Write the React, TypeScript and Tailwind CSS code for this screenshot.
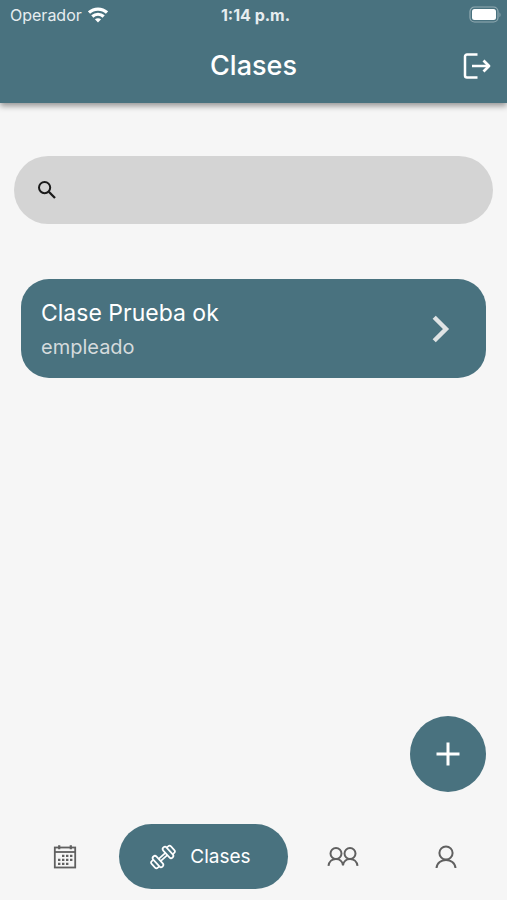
import { useState } from 'react';

const classes = [{ id: 1, name: 'Clase Prueba ok', trainer: 'empleado' }];

function WifiIcon() {
  return (
    <svg width="20" height="16" viewBox="0 0 20 16" fill="none" stroke="white" strokeWidth="3.2">
      <path d="M1 5.6C6 .9 14 .9 19 5.6" />
      <path d="M4.3 9.5c3.3-3 8.1-3 11.4 0" />
      <path d="M10 15.4 6.9 12.3c1.7-1.5 4.500-1.500 6.200 0z" fill="white" stroke="none" />
    </svg>
  );
}

function BatteryIcon() {
  return (
    <svg width="33" height="18" viewBox="0 0 33 18" fill="none">
      <rect x="2" y="1" width="28" height="15" rx="4.5" stroke="#94acb4" strokeWidth="1.2" />
      <rect x="4" y="3" width="24" height="11" rx="2.5" fill="white" />
      <path d="M31.500 6.500c1.300.6 1.300 4 0 4.600z" fill="#94acb4" />
    </svg>
  );
}

function LogoutIcon() {
  return (
    <svg width="28" height="26" viewBox="0 0 28 26" fill="none" stroke="white" strokeWidth="2.5">
      <path d="M14.500 1.500H4a2 2 0 0 0-2 2v19a2 2 0 0 0 2 2h10.500" />
      <path d="M9 13h16.500" />
      <path d="m20.500 7.500 5.500 5.500-5.500 5.500" strokeLinejoin="round" strokeWidth="2.8" />
    </svg>
  );
}

function SearchIcon() {
  return (
    <svg width="18" height="18" viewBox="0 0 18 18" fill="none" stroke="#1a1a1a" strokeWidth="2">
      <circle cx="6.600" cy="6.600" r="5.600" />
      <path d="m10.800 10.800 6.200 6.200" strokeWidth="2.300" />
    </svg>
  );
}

function ChevronIcon() {
  return (
    <svg width="18" height="28" viewBox="0 0 18 28" fill="none" stroke="#dfe3e4" strokeWidth="4.4">
      <path d="M2.200 2.200 14 14 2.200 25.800" />
    </svg>
  );
}

function PlusIcon() {
  return (
    <svg width="24" height="24" viewBox="0 0 24 24" stroke="white" strokeWidth="3">
      <path d="M12 .5v23M.5 12h23" />
    </svg>
  );
}

function CalendarIcon() {
  return (
    <svg width="24" height="24" viewBox="0 0 24 24" fill="none" stroke="#606060" strokeWidth="1.8">
      <rect x="1.800" y="2.500" width="20.400" height="20" />
      <path d="M2 7h20" />
      <path d="M6.200.3v4M17.800.3v4" strokeWidth="2.200" />
      <path d="M9 10.800h11M5 14.800h15M5 18.800h11" strokeWidth="2.200" strokeDasharray="2.400 1.600" />
    </svg>
  );
}

function DumbbellIcon() {
  return (
    <svg width="26" height="26" viewBox="0 0 26 26" fill="none" stroke="white" strokeWidth="1.7">
      <g transform="rotate(-42 13 13)">
        <path d="M8.500 11.600h9M8.500 14.400h9" />
        <rect x="4" y="6.200" width="4.500" height="13.600" rx="2.200" />
        <rect x="17.500" y="6.200" width="4.500" height="13.600" rx="2.200" />
        <path d="M4 8.500H2A2 2 0 0 0 0 10.500v5a2 2 0 0 0 2 2h2" />
        <path d="M22 8.500h2a2 2 0 0 1 2 2v5a2 2 0 0 1-2 2h-2" />
      </g>
    </svg>
  );
}

function PeopleIcon() {
  return (
    <svg width="32" height="20" viewBox="0 0 32 20" fill="none" stroke="#606060" strokeWidth="2">
      <circle cx="9" cy="6.500" r="5.500" />
      <circle cx="23" cy="6.500" r="5.500" />
      <path d="M1.500 18.800C2.500 9.700 15 9.700 16 18.300 17 9.700 29.500 9.700 30.500 18.800" />
    </svg>
  );
}

function PersonIcon() {
  return (
    <svg width="22" height="24" viewBox="0 0 22 24" fill="none" stroke="#606060" strokeWidth="2">
      <circle cx="11" cy="8" r="6.600" />
      <path d="M1.500 23c.8-10.800 18.200-10.800 19 0" />
    </svg>
  );
}

export default function App() {
  const [search, setSearch] = useState('');

  const filtered = classes.filter((c) =>
    c.name.toLowerCase().includes(search.toLowerCase())
  );

  return (
    <div className="flex min-h-screen flex-col bg-[#f6f6f6] font-['Inter',sans-serif]">
      <header className="bg-[#49727f] text-white shadow-[0_3px_6px_rgba(0,0,0,0.4)]">
        <div className="grid h-7 grid-cols-3 items-center pl-2.5 pr-1.5 pt-0.5 text-base leading-6">
          <div className="flex items-center gap-1.5 text-[#e6edf0]">
            <span>Operador</span>
            <WifiIcon />
          </div>
          <span className="text-center font-bold text-[#e6edf0]">1:14 p.m.</span>
          <div className="flex justify-end">
            <BatteryIcon />
          </div>
        </div>
        <div className="grid h-[75px] grid-cols-[1fr_auto_1fr] items-center px-4">
          <h1 className="col-start-2 text-[27px] font-medium leading-8">Clases</h1>
          <button type="button" aria-label="Salir" className="justify-self-end">
            <LogoutIcon />
          </button>
        </div>
      </header>

      <main className="flex flex-1 flex-col">
        <label className="mx-3.5 mt-[53px] flex h-[68px] items-center gap-3 rounded-full bg-[#d4d4d4] px-6">
          <SearchIcon />
          <input
            type="text"
            aria-label="Buscar clase"
            value={search}
            onChange={(e) => setSearch(e.target.value)}
            className="min-w-0 flex-1 bg-transparent text-xl text-[#111] outline-none"
          />
        </label>

        <ul className="mx-[21px] mt-[55px] flex flex-col gap-4">
          {filtered.map((item) => (
            <li key={item.id}>
              <button
                type="button"
                className="flex h-[99px] w-full items-center justify-between rounded-[28px] bg-[#49727f] pl-5 pr-9 text-left"
              >
                <span className="flex flex-col gap-0.5 pt-0.5">
                  <span className="text-[23px] leading-8 text-white">{item.name}</span>
                  <span className="text-xl leading-8 text-[#d5dbdd]">{item.trainer}</span>
                </span>
                <ChevronIcon />
              </button>
            </li>
          ))}
        </ul>

        <button
          type="button"
          aria-label="Agregar clase"
          className="mb-8 mr-[21px] mt-auto flex size-[76px] items-center justify-center self-end rounded-full bg-[#49727f]"
        >
          <PlusIcon />
        </button>
      </main>

      <nav className="flex items-center gap-1.5 pb-[11px] pl-4 pr-3">
        <a href="#calendario" aria-label="Calendario" className="flex flex-1 justify-center">
          <CalendarIcon />
        </a>
        <a
          href="#clases"
          className="flex h-[65px] w-[169px] items-center gap-3.5 rounded-full bg-[#49727f] pl-[31px] text-[19px] leading-6 text-white"
        >
          <DumbbellIcon />
          Clases
        </a>
        <a href="#usuarios" aria-label="Usuarios" className="flex flex-1 justify-center">
          <PeopleIcon />
        </a>
        <a href="#perfil" aria-label="Perfil" className="flex flex-1 justify-center">
          <PersonIcon />
        </a>
      </nav>
    </div>
  );
}
